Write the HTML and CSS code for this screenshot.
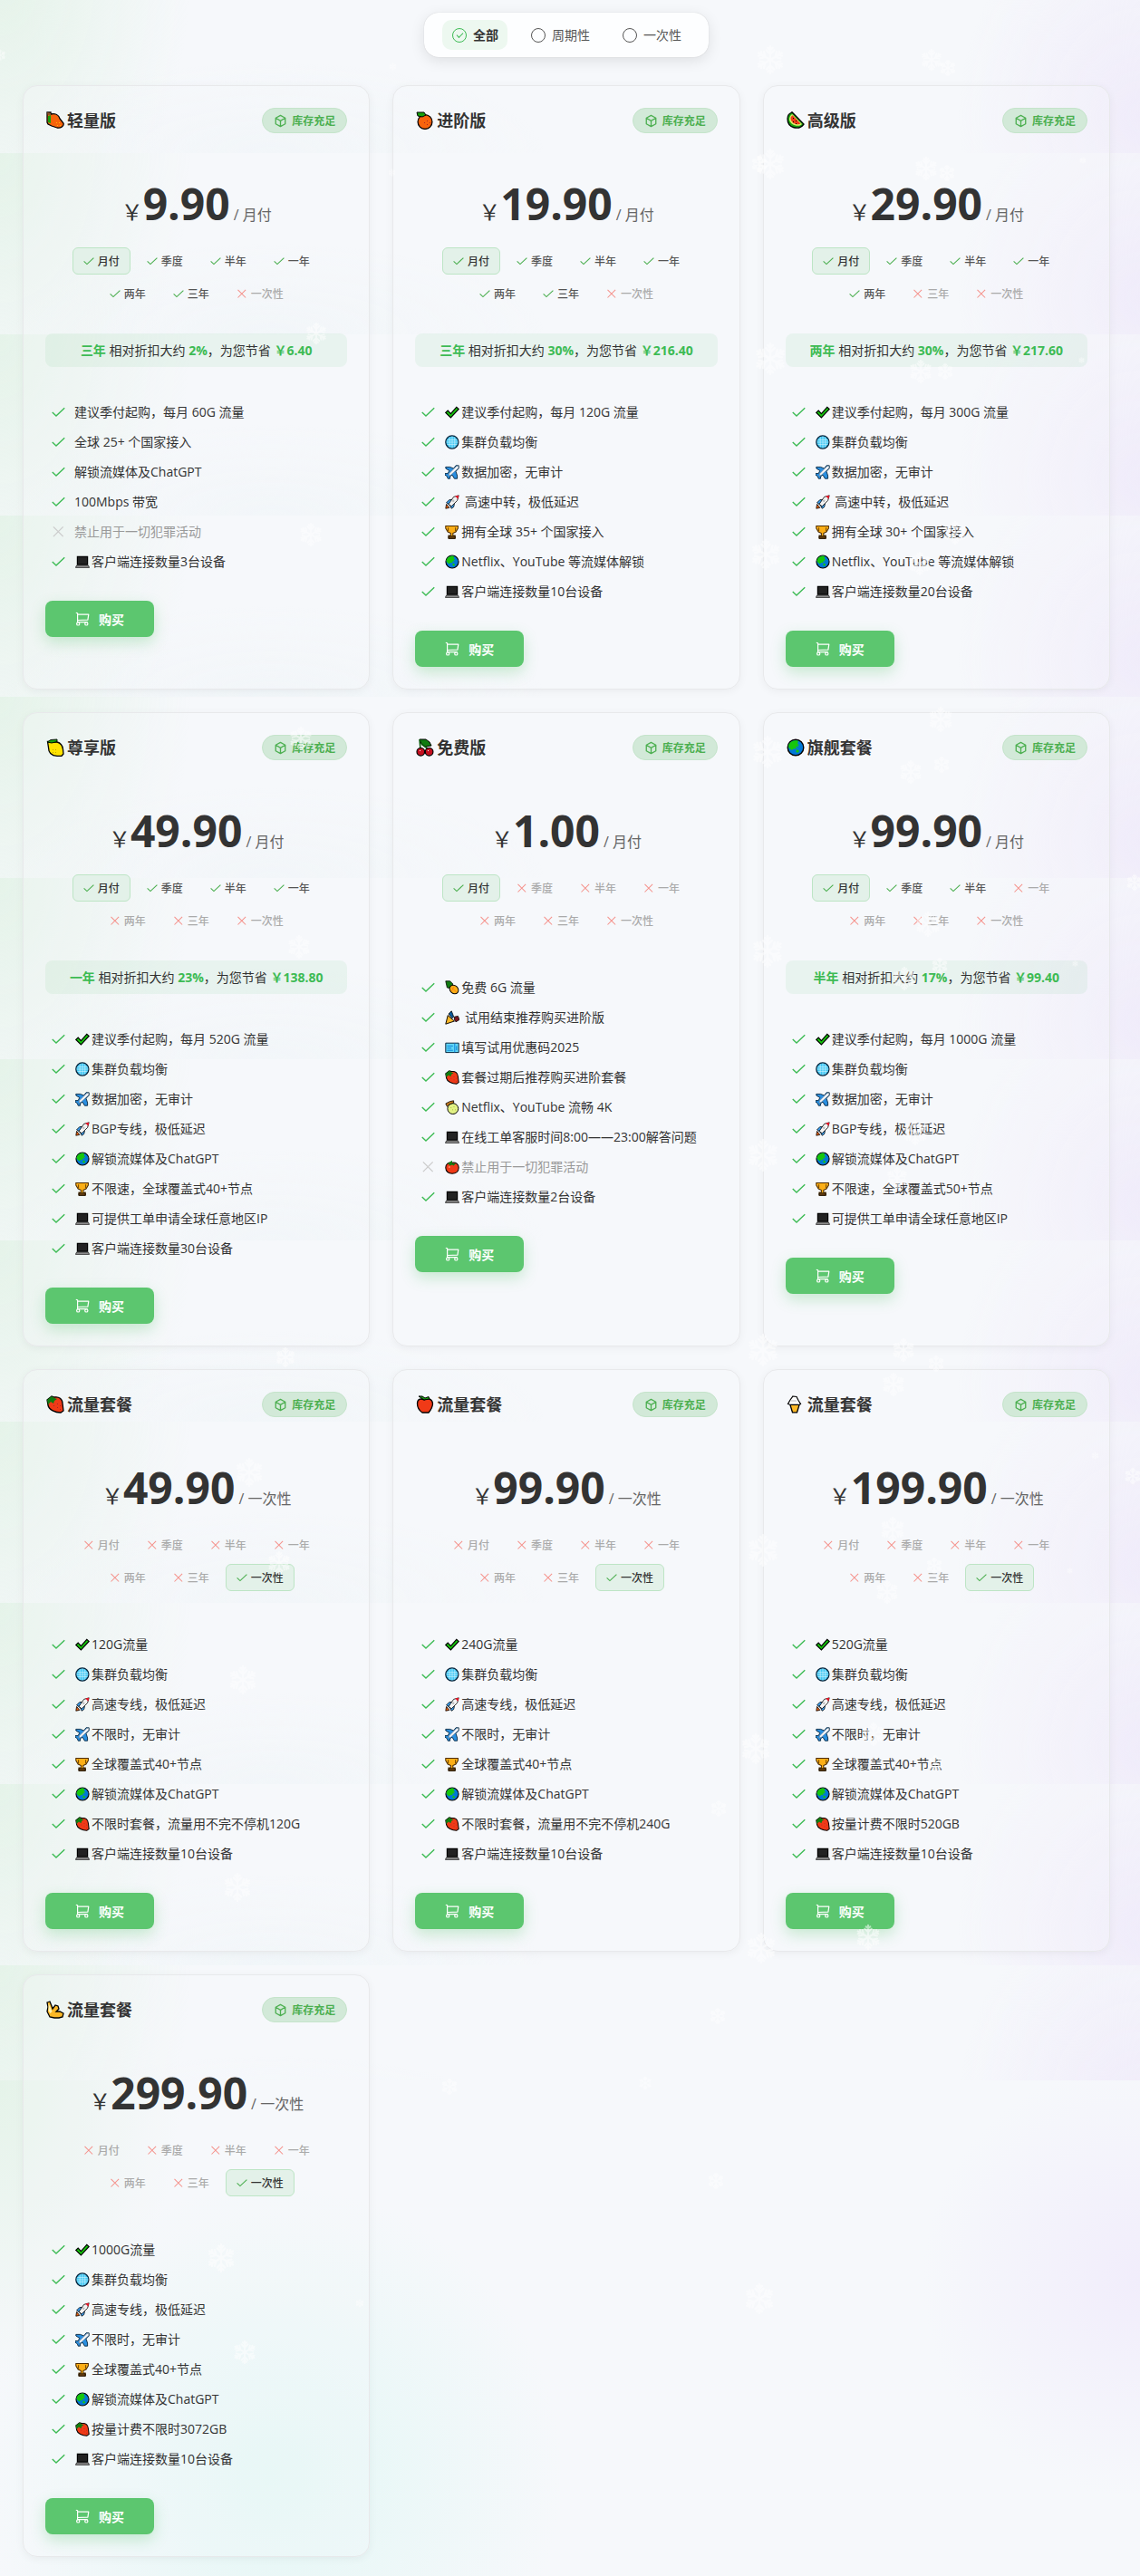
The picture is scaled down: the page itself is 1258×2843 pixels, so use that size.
FILE: index.html
```html
<!DOCTYPE html>
<html lang="zh-CN">
<head>
  <meta charset="UTF-8">
  <meta name="viewport" content="width=device-width, initial-scale=1">
  <title>套餐</title>
  <link rel="stylesheet" href="styles.css">
</head>
<body>
  <!-- Icon sprite -->
  <svg class="sprite" aria-hidden="true">
    <symbol id="i-check" viewBox="0 0 16 16"><path d="M.8 8.6l4.5 4.2L15.2 3.4" fill="none" stroke="currentColor" stroke-width="1.5"/></symbol>
    <symbol id="i-cross" viewBox="0 0 16 16"><path d="M2 2.500l11.5 11.5M13.5 2.500L2 14" fill="none" stroke="currentColor" stroke-width="1.4"/></symbol>
    <symbol id="i-box" viewBox="0 0 16 16"><path d="M8 1.500l5.600 3v7L8 14.5l-5.600-3v-7zM2.400 4.500L8 7.800l5.600-3.300M8 7.800v6.700" fill="none" stroke="currentColor" stroke-width="1.4" stroke-linejoin="round"/></symbol>
    <symbol id="i-cart" viewBox="0 0 16 16"><path d="M.8 1.200l1.800.6v9.900h11M2.600 3.200h12.200l-.9 5.900-11.300.4" fill="none" stroke="currentColor" stroke-width="1.2" stroke-linejoin="round"/><circle cx="3.200" cy="13.400" r="1.600" fill="#5cc66f" stroke="currentColor" stroke-width="1.2"/><circle cx="12.300" cy="13.400" r="1.600" fill="#5cc66f" stroke="currentColor" stroke-width="1.2"/></symbol>
    <symbol id="i-flake" viewBox="0 0 32 32"><g fill="none" stroke="#fff" stroke-width="2.2" stroke-linecap="round"><path id="arm" d="M16 16V2M16 10l-4-4M16 10l4-4M16 6l-2.500-2.500M16 6l2.500-2.500"/><use href="#arm" transform="rotate(60 16 16)"/><use href="#arm" transform="rotate(120 16 16)"/><use href="#arm" transform="rotate(180 16 16)"/><use href="#arm" transform="rotate(240 16 16)"/><use href="#arm" transform="rotate(300 16 16)"/></g></symbol>

    <symbol id="e-mango" viewBox="0 0 20 20"><path d="M1 1h4v2c5-1 9 1 10 5l4 5c1 3-3 6-7 5l-6-2-4-2-1-2z" fill="#f7630c" stroke="#000" stroke-width="1.3"/><path d="M2 5l3-1v9l-3-1z" fill="#16a00c"/><path d="M1 1l4 1v2H2z" fill="#8e562e"/><path d="M11 12h1v1h-1zM14 12h1v1h-1zM12 15h1v1h-1zM15 15h1v1h-1z" fill="#ffb900"/></symbol>
    <symbol id="e-orange" viewBox="0 0 20 20"><circle cx="10" cy="11.5" r="7.9" fill="#f7630c" stroke="#000" stroke-width="1.3"/><path d="M1 1h8l2 3-4 2-5-1z" fill="#16a00c" stroke="#000"/><path d="M9 12h1v1H9zM12 10h1v1h-1zM12 14h1v1h-1zM15 12h1v1h-1z" fill="#a4262c"/></symbol>
    <symbol id="e-melon" viewBox="0 0 20 20"><path d="M6 .8L19 14c-5 7-18 5-18-6 0-3 2-6 5-7z" fill="#16a00c" stroke="#000" stroke-width="1.3"/><path d="M6.2 3L17 14c-4 4-13 1-14-5 0-2 1-5 3.200-6z" fill="#d8f06a"/><path d="M6.6 4.200L15.5 13.6C11 16 4 12 4.500 7c.3-1 1-2 2.100-2.800z" fill="#f03a17"/><path d="M7 7h1v1H7zM7 11h1v1H7zM10 10h1v1h-1zM10 13h1v1h-1z" fill="#000"/></symbol>
    <symbol id="e-lemon" viewBox="0 0 20 20"><path d="M1.500 3.500L5 4l7 0c4 1 6 4 6.500 8l.5 5-2 2.300-5 0C6 19 2.500 16 2.500 10z" fill="#ffe300" stroke="#000" stroke-width="1.3"/><path d="M1 4l4-2.500L12 1v2.500L6 5z" fill="#16a00c" stroke="#000" stroke-width=".9"/><path d="M7 12h1v1H7zM10 12h1v1h-1zM7 15h1v1H7zM10 15h1v1h-1z" fill="#c9a400"/></symbol>
    <symbol id="e-cherry" viewBox="0 0 20 20"><path d="M4 1h7l4 3 2 4-7 1-4-3z" fill="#107c10" stroke="#000"/><path d="M4 1l1 11M6 6l8 6" fill="none" stroke="#0a5a0a" stroke-width="1.6"/><circle cx="5.3" cy="14.8" r="4.300" fill="#c50f1f" stroke="#000" stroke-width="1.2"/><circle cx="14.6" cy="14.8" r="4.300" fill="#c50f1f" stroke="#000" stroke-width="1.2"/><path d="M4 13h1v1H4zM13 13h1v1h-1z" fill="#fff"/></symbol>
    <symbol id="e-earth" viewBox="0 0 20 20"><circle cx="10" cy="10" r="8.8" fill="#0078d7" stroke="#000" stroke-width="1.4"/><path d="M2 9c0-4 4-7 9-7l2 1-1 3 2 1-4 3 1 2-3-1-2 2-3-2zM12 12l2 2-2 2-2-2zM12 9h1v1h-1z" fill="#16c60c"/></symbol>
    <symbol id="e-berry" viewBox="0 0 20 20"><path d="M1 5l5-4 3 1c5-1 9 2 9 7l1 8-3 2c-6 0-13-3-14-8z" fill="#f03a17" stroke="#000" stroke-width="1.3"/><path d="M1 5l5-4 3 2 3 1-3 2-1 3-3-2-3 3z" fill="#107c10"/><path d="M8 11h1v1H8zM12 9h1v1h-1zM12 13h1v1h-1zM15 11h1v1h-1zM15 15h1v1h-1z" fill="#a4262c"/></symbol>
    <symbol id="e-apple" viewBox="0 0 20 20"><path d="M9 5c4-2.500 9-1 9.500 4 0 4-2 7-4.500 10H7C4 17 1.500 13 1.500 9 1.500 4 5 3 9 5z" fill="#f03a17" stroke="#000" stroke-width="1.3"/><path d="M9 5L3 1h4l3 2 4-1.500L15 4z" fill="#16a00c" stroke="#000"/></symbol>
    <symbol id="e-icecream" viewBox="0 0 20 20"><path d="M3.500 9l3 9.800h5L14.500 9z" fill="#fcb827" stroke="#000" stroke-width="1.3"/><path d="M7 1l4 .5 2 4 2.500 4-2 1h-9L1.500 9.500 4 5z" fill="#fff" stroke="#000" stroke-width="1.2"/><path d="M3.500 9.500h10M5 6h6" stroke="#bbb"/></symbol>
    <symbol id="e-banana" viewBox="0 0 20 20"><path d="M1 2l3-1 2 5 1 3 3-4 3 1 1 3-3 3 4 0 4 2-1 4-4 1H9l-5-1-3-6 1-5z" fill="#fcb827" stroke="#000" stroke-width="1.3"/><path d="M2.500 3l2 4 2 5-2 2-2-3z" fill="#fff2b0"/></symbol>
    <symbol id="e-check" viewBox="0 0 20 20"><path d="M1 10.5l3-3L8 12 16 3l3 2.600L8 17.5z" fill="#16c60c" stroke="#000" stroke-width="1.5"/></symbol>
    <symbol id="e-globe" viewBox="0 0 20 20"><circle cx="9.800" cy="10" r="8.800" fill="#3fc6f3" stroke="#05233b" stroke-width="1.6"/><path d="M3 7h14M2 10h16M3 13h14M10 2v16M6.500 3v14M13.5 3v14" stroke="#d8f6ff" stroke-width=".8"/></symbol>
    <symbol id="e-plane" viewBox="0 0 20 20"><path d="M1 3h6l5 2 3-4h4v4l-4 4 2 6v4h-4l-3-5-3 2v3H4l-1-3-3-2v-2h4l2-4-5-3z" fill="#2b8fe0" stroke="#05233b" stroke-width="1.1"/><path d="M18.5 1.500v3L8 14l-3 1 1-3 10-10z" fill="#f4f6fa" stroke="#777" stroke-width=".6"/></symbol>
    <symbol id="e-rocket" viewBox="0 0 20 20"><path d="M1 19l1-6 4 5z" fill="#f7630c" stroke="#000"/><path d="M2 11l4-4h4l3 6-1 4-3 2-2-4-2-2z" fill="#3aa0f3" stroke="#000"/><path d="M5 13L12 3l7-2-2 7-8 8z" fill="#f3f3f3" stroke="#000"/><path d="M14 1.800L19 1l-1 5z" fill="#e81224"/><circle cx="11.5" cy="8.5" r="1.5" fill="#bbb"/></symbol>
    <symbol id="e-trophy" viewBox="0 0 20 20"><path d="M1 2h17v3l-3 5-4 2v3h3v4H5v-4h3v-3L4 10 1 5z" fill="#fcaf17" stroke="#4d2c00" stroke-width="1.3"/><path d="M4.500 4v5M14.5 4v5" stroke="#4d2c00"/><path d="M5 16h9v3H5z" fill="#7a4a12" stroke="#000"/></symbol>
    <symbol id="e-laptop" viewBox="0 0 20 20"><path d="M3 3h14v11H3z" fill="#222" stroke="#000" stroke-width="1.5"/><path d="M2 15h16l1.500 3H.5z" fill="#999" stroke="#222"/></symbol>
    <symbol id="e-pine" viewBox="0 0 20 20"><path d="M1 1h6l4 4-3 6-5-1z" fill="#107c10" stroke="#000"/><ellipse cx="12.5" cy="12.5" rx="6.6" ry="5.4" transform="rotate(40 12.5 12.5)" fill="#fcaf17" stroke="#000" stroke-width="1.2"/><path d="M9 10l7 6M13 8l-4 7" stroke="#f7630c" stroke-width=".7"/></symbol>
    <symbol id="e-party" viewBox="0 0 20 20"><path d="M4 7l9 8L1 19z" fill="#fcb827" stroke="#000" stroke-width="1.2"/><path d="M5 5l4-4 2 5 1 3-2 2z" fill="#0a5b9c" stroke="#000"/><path d="M13 9l5-1 2 5-5 3-2-3z" fill="#7a1620" stroke="#000"/></symbol>
    <symbol id="e-ticket" viewBox="0 0 20 20"><path d="M1 4h18v13H1z" fill="#61d6f5" stroke="#05233b" stroke-width="1.2"/><path d="M3 8h8M3 11h6M3 14h8M13.5 4v13M16 8v6" stroke="#0078d7" stroke-width="1.1"/></symbol>
    <symbol id="e-guava" viewBox="0 0 20 20"><circle cx="11" cy="12" r="7.4" fill="#e2f285" stroke="#000" stroke-width="1.2"/><path d="M1 5l6-3 5-1v3L6 6 3 9z" fill="#c87b1e" stroke="#000"/><path d="M8 10h1v1H8zM12 9h1v1h-1zM10 13h1v1h-1zM14 13h1v1h-1z" fill="#8a9a20"/></symbol>
    <symbol id="e-tomato" viewBox="0 0 20 20"><path d="M10 4c5-1 9 2 9 7s-4 8-9 8-9-3-9-8 4-8 9-7z" fill="#f03a17" stroke="#000" stroke-width="1.3"/><path d="M10 1v4l5 0-3 3-2-1-3 1-3-3z" fill="#107c10"/><path d="M5 9h2v2H5z" fill="#ff9a80"/></symbol>
  </svg>

  <div class="backdrop" aria-hidden="true">
    <div class="backdrop-bands"></div>
    <div class="backdrop-foot"></div>
  </div>

  <div class="page">
    <form class="filter" id="filter">
      <label class="filter-item"><input type="radio" name="type" value="all" checked><span>全部</span></label>
      <label class="filter-item"><input type="radio" name="type" value="period"><span>周期性</span></label>
      <label class="filter-item"><input type="radio" name="type" value="once"><span>一次性</span></label>
    </form>
    <main class="plans" id="plans"></main>
  </div>

  <div class="snow" id="snow" aria-hidden="true"></div>

  <script src="plans.js"></script>
</body>
</html>
```
FILE: plans.js
```js
const PERIODS = ["月付", "季度", "半年", "一年", "两年", "三年", "一次性"];

// open: how many periods can be bought, counted from 月付 ("once" = only 一次性)
// features: [emoji, text], a leading "!" marks one that is not included
const plans = [
  { emoji: "mango", name: "轻量版", price: "9.90", open: 6, save: ["三年", "2%", "6.40"], features: [
    ["", "建议季付起购，每月 60G 流量"], ["", "全球 25+ 个国家接入"], ["", "解锁流媒体及ChatGPT"],
    ["", "100Mbps 带宽"], ["", "!禁止用于一切犯罪活动"], ["laptop", "客户端连接数量3台设备"]] },
  { emoji: "orange", name: "进阶版", price: "19.90", open: 6, save: ["三年", "30%", "216.40"], features: [
    ["check", "建议季付起购，每月 120G 流量"], ["globe", "集群负载均衡"], ["plane", "数据加密，无审计"],
    ["rocket", " 高速中转，极低延迟"], ["trophy", "拥有全球 35+ 个国家接入"],
    ["earth", "Netflix、YouTube 等流媒体解锁"], ["laptop", "客户端连接数量10台设备"]] },
  { emoji: "melon", name: "高级版", price: "29.90", open: 5, save: ["两年", "30%", "217.60"], features: [
    ["check", "建议季付起购，每月 300G 流量"], ["globe", "集群负载均衡"], ["plane", "数据加密，无审计"],
    ["rocket", " 高速中转，极低延迟"], ["trophy", "拥有全球 30+ 个国家接入"],
    ["earth", "Netflix、YouTube 等流媒体解锁"], ["laptop", "客户端连接数量20台设备"]] },
  { emoji: "lemon", name: "尊享版", price: "49.90", open: 4, save: ["一年", "23%", "138.80"], features: [
    ["check", "建议季付起购，每月 520G 流量"], ["globe", "集群负载均衡"], ["plane", "数据加密，无审计"],
    ["rocket", "BGP专线，极低延迟"], ["earth", "解锁流媒体及ChatGPT"], ["trophy", "不限速，全球覆盖式40+节点"],
    ["laptop", "可提供工单申请全球任意地区IP"], ["laptop", "客户端连接数量30台设备"]] },
  { emoji: "cherry", name: "免费版", price: "1.00", open: 1, features: [
    ["pine", "免费 6G 流量"], ["party", " 试用结束推荐购买进阶版"], ["ticket", "填写试用优惠码2025"],
    ["berry", "套餐过期后推荐购买进阶套餐"], ["guava", "Netflix、YouTube 流畅 4K"],
    ["laptop", "在线工单客服时间8:00——23:00解答问题"], ["tomato", "!禁止用于一切犯罪活动"],
    ["laptop", "客户端连接数量2台设备"]] },
  { emoji: "earth", name: "旗舰套餐", price: "99.90", open: 3, save: ["半年", "17%", "99.40"], features: [
    ["check", "建议季付起购，每月 1000G 流量"], ["globe", "集群负载均衡"], ["plane", "数据加密，无审计"],
    ["rocket", "BGP专线，极低延迟"], ["earth", "解锁流媒体及ChatGPT"], ["trophy", "不限速，全球覆盖式50+节点"],
    ["laptop", "可提供工单申请全球任意地区IP"]] },
  { emoji: "berry", name: "流量套餐", price: "49.90", open: "once", features: dataPack("120G", "不限时套餐，流量用不完不停机120G") },
  { emoji: "apple", name: "流量套餐", price: "99.90", open: "once", features: dataPack("240G", "不限时套餐，流量用不完不停机240G") },
  { emoji: "icecream", name: "流量套餐", price: "199.90", open: "once", features: dataPack("520G", "按量计费不限时520GB") },
  { emoji: "banana", name: "流量套餐", price: "299.90", open: "once", features: dataPack("1000G", "按量计费不限时3072GB") },
];

function dataPack(size, terms) {
  return [["check", size + "流量"], ["globe", "集群负载均衡"], ["rocket", "高速专线，极低延迟"],
    ["plane", "不限时，无审计"], ["trophy", "全球覆盖式40+节点"], ["earth", "解锁流媒体及ChatGPT"],
    ["berry", terms], ["laptop", "客户端连接数量10台设备"]];
}

const icon = (id, cls) => `<svg class="${cls}" aria-hidden="true"><use href="#${id}"/></svg>`;

function periodButton(label, i, plan) {
  const once = plan.open === "once";
  const on = once ? i === 6 : i < plan.open;
  const active = once ? i === 6 : i === 0;
  return `<button type="button" class="period${active ? " active" : ""}"${on ? "" : " disabled"}>` +
    `${icon(on ? "i-check" : "i-cross", "period-icon")}${label}</button>`;
}

function featureItem([emoji, text]) {
  const off = text.startsWith("!");
  return `<li class="feature${off ? " off" : ""}">${icon(off ? "i-cross" : "i-check", "feature-icon")}` +
    `<span class="feature-text">${emoji ? icon("e-" + emoji, "emoji") : ""}${text.replace("!", "")}</span></li>`;
}

function planCard(p) {
  const save = p.save
    ? `<p class="save"><b>${p.save[0]}</b> 相对折扣大约 <b>${p.save[1]}</b>，为您节省 <b>￥${p.save[2]}</b></p>` : "";
  return `<article class="plan" data-type="${p.open === "once" ? "once" : "period"}">
    <header class="plan-head">
      <h2 class="plan-name">${icon("e-" + p.emoji, "emoji")}${p.name}</h2>
      <span class="stock">${icon("i-box", "stock-icon")}库存充足</span>
    </header>
    <p class="price"><span class="currency">￥</span><strong class="amount">${p.price}</strong><span class="unit">/ ${p.open === "once" ? "一次性" : "月付"}</span></p>
    <div class="periods">${PERIODS.map((label, i) => periodButton(label, i, p)).join("")}</div>
    ${save}
    <ul class="features">${p.features.map(featureItem).join("")}</ul>
    <button type="button" class="buy">${icon("i-cart", "buy-icon")}购买</button>
  </article>`;
}

const list = document.getElementById("plans");
list.innerHTML = plans.map(planCard).join("");

document.getElementById("filter").addEventListener("change", (e) => {
  list.querySelectorAll(".plan").forEach((card) => {
    card.hidden = e.target.value !== "all" && card.dataset.type !== e.target.value;
  });
});

// Snowflakes: x, y of the centre and size
const flakes = [
  [0, 61, 14], [433, 73, 9], [432, 190, 9], [1028, 66, 26], [1046, 75, 20], [850, 66, 34],
  [850, 181, 36], [1022, 186, 28], [1045, 191, 20], [1195, 177, 8], [349, 368, 26], [838, 181, 20],
  [850, 396, 38], [1016, 410, 28], [1043, 410, 20], [1193, 397, 7], [343, 590, 28], [845, 612, 36],
  [1054, 588, 28], [1015, 622, 28], [332, 815, 28], [1038, 794, 30], [847, 830, 38], [1005, 852, 28],
  [1039, 844, 20], [847, 1050, 38], [1024, 1020, 30], [1037, 1066, 20], [998, 1080, 28],
  [1186, 1063, 7], [1252, 974, 20], [330, 1045, 28], [842, 1275, 38], [1010, 1250, 30], [990, 1300, 26],
  [842, 1490, 38], [997, 1490, 28], [315, 1498, 24], [275, 1625, 34], [308, 1725, 28], [268, 1854, 34],
  [1033, 1505, 20], [986, 1528, 28], [842, 1711, 38], [985, 1688, 30], [979, 1757, 28], [1031, 1728, 20],
  [1250, 1629, 20], [1208, 1606, 9], [1180, 1733, 7], [964, 1914, 28], [1032, 1946, 20], [793, 1996, 20],
  [834, 1930, 36], [262, 2083, 34], [958, 2138, 30], [840, 2150, 36], [792, 2225, 20], [496, 2303, 20],
  [712, 2299, 16], [790, 2407, 20], [244, 2492, 34], [270, 2596, 28], [838, 2537, 36], [397, 2542, 10],
];
document.getElementById("snow").innerHTML = flakes.map(([x, y, s]) =>
  `<svg class="flake" style="left:${x - s / 2}px;top:${y - s / 2}px;width:${s}px;height:${s}px"><use href="#i-flake"/></svg>`
).join("");
```
FILE: styles.css
```css
* {
  margin: 0;
  padding: 0;
  box-sizing: border-box;
}
body {
  position: relative;
  background: #f6f8fb;
  color: #333;
  font-family: "Open Sans", "Noto Sans CJK SC", sans-serif;
  font-size: 14px;
  line-height: 21px;
}
button {
  font: inherit;
}
svg {
  display: block;
  flex: none;
}
.sprite {
  position: absolute;
  width: 0;
  height: 0;
}

/* Soft colour blobs behind the page */
.backdrop {
  position: absolute;
  inset: 0;
  z-index: -1;
  overflow: hidden;
  display: flex;
  flex-direction: column;
}
.backdrop-bands {
  flex: 1;
  background:
    radial-gradient(ellipse 210px 330px at 0 0, #e5f3e9, transparent) 0 169px / 100% 200px,
    radial-gradient(ellipse 200px 240px at 100% 160px, #f0ecfa, transparent) 0 169px / 100% 200px,
    radial-gradient(ellipse 300px 100px at 300px 100%, #f1f6f9, transparent) 0 169px / 100% 200px;
}
.backdrop-foot {
  height: 548px;
  background:
    radial-gradient(ellipse 200px 330px at 0 0, #e5f3e9, transparent),
    radial-gradient(circle 320px at 300px 435px, #e3f7f5, transparent),
    radial-gradient(circle 240px at 100% 220px, #f1edfb, transparent);
}

.page {
  padding: 14px 33px 22px 25px;
}

/* Filter */
.filter {
  display: flex;
  gap: 15px;
  width: fit-content;
  margin: 0 auto 31px;
  padding: 8px 20px;
  border-radius: 16px;
  background: #fdfeff;
  box-shadow: 0 4px 16px rgba(0, 0, 0, .1), 0 0 1px rgba(0, 0, 0, .2);
}
.filter-item {
  display: flex;
  align-items: center;
  gap: 7px;
  padding: 6px 10px;
  border-radius: 10px;
  color: #555;
  cursor: pointer;
}
.filter-item:has(:checked) {
  background: #edf8f0;
  color: #333;
  font-weight: 600;
}
.filter-item input {
  appearance: none;
  display: grid;
  place-items: center;
  width: 16px;
  height: 16px;
  margin-left: 1px;
  border: 1px solid #555;
  border-radius: 50%;
}
.filter-item input:checked {
  border-color: #3dbb54;
}
.filter-item input:checked::after {
  content: "";
  width: 6px;
  height: 3px;
  margin-bottom: 2px;
  border: solid #3dbb54;
  border-width: 0 0 1px 1px;
  transform: rotate(-45deg);
}

/* Plan cards */
.plans {
  display: grid;
  grid-template-columns: repeat(3, 1fr);
  gap: 25px;
}
.plan {
  padding: 24px;
  border: 1px solid #e8e9eb;
  border-radius: 16px;
  background: rgba(246, 248, 252, .25);
  box-shadow: 0 2px 10px rgba(0, 0, 0, .05);
}
.plan[hidden] {
  display: none;
}
.plan-head {
  display: flex;
  justify-content: space-between;
  align-items: center;
}
.plan-name {
  display: flex;
  align-items: center;
  font-size: 18px;
  font-weight: 600;
}
.plan-name .emoji {
  width: 20px;
  height: 20px;
  margin: 0 3px 0 1px;
}
.stock {
  display: flex;
  align-items: center;
  gap: 5px;
  height: 28px;
  padding: 0 12px;
  border: 1px solid #c5e4cb;
  border-radius: 14px;
  background: #d2e9d8;
  color: #4caf50;
  font-size: 12px;
  font-weight: 600;
}
.stock-icon {
  width: 15px;
  height: 15px;
}
.price {
  display: flex;
  justify-content: center;
  align-items: baseline;
  margin: 54px 0 12px;
  line-height: 48px;
}
.currency {
  font-size: 24px;
}
.amount {
  font-size: 48px;
}
.unit {
  margin-left: 4px;
  color: #666;
  font-size: 16px;
}

/* Billing periods */
.periods {
  display: flex;
  flex-wrap: wrap;
  justify-content: center;
  gap: 6px;
  margin-bottom: 29px;
  padding: 0 25px;
}
.period {
  display: flex;
  align-items: center;
  gap: 4px;
  height: 30px;
  padding: 0 11px;
  border: 1px solid transparent;
  border-radius: 6px;
  background: none;
  color: #555;
  font-size: 12px;
  font-weight: 500;
}
.period.active {
  border-color: #bde5c5;
  background: #e3f1e9;
  color: #333;
}
.period:disabled {
  color: #aaa;
}
.period-icon {
  width: 12px;
  height: 12px;
  color: #4caf50;
}
.period:disabled .period-icon {
  color: #f5928c;
}

.save {
  margin-bottom: 20px;
  padding: 8px;
  border-radius: 8px;
  background: rgba(61, 187, 84, .07);
  text-align: center;
}
.save b {
  color: #3dbb54;
}

/* Features */
.features {
  margin-bottom: 27px;
  padding: 13px 0 0 7px;
  list-style: none;
}
.feature {
  display: flex;
  align-items: center;
  gap: 10px;
  padding: 6px 0;
}
.feature-icon {
  width: 15px;
  height: 15px;
  color: #3dbb54;
}
.feature-text {
  display: flex;
  align-items: center;
  white-space: pre;
}
.feature-text .emoji {
  width: 16px;
  height: 16px;
  margin: 0 2px 0 1px;
}
.feature.off {
  color: #999;
}
.feature.off .feature-icon {
  color: #ccc;
}

.buy {
  display: flex;
  justify-content: center;
  align-items: center;
  gap: 10px;
  width: 120px;
  height: 40px;
  border: 0;
  border-radius: 8px;
  background: #5cc66f;
  box-shadow: 0 6px 16px rgba(61, 187, 84, .25);
  color: #fff;
  font-weight: 600;
  cursor: pointer;
}
.buy-icon {
  width: 16px;
  height: 16px;
}

/* Snow drifts over everything */
.snow {
  position: absolute;
  inset: 0;
  overflow: hidden;
  pointer-events: none;
}
.flake {
  position: absolute;
  opacity: .55;
}
```
